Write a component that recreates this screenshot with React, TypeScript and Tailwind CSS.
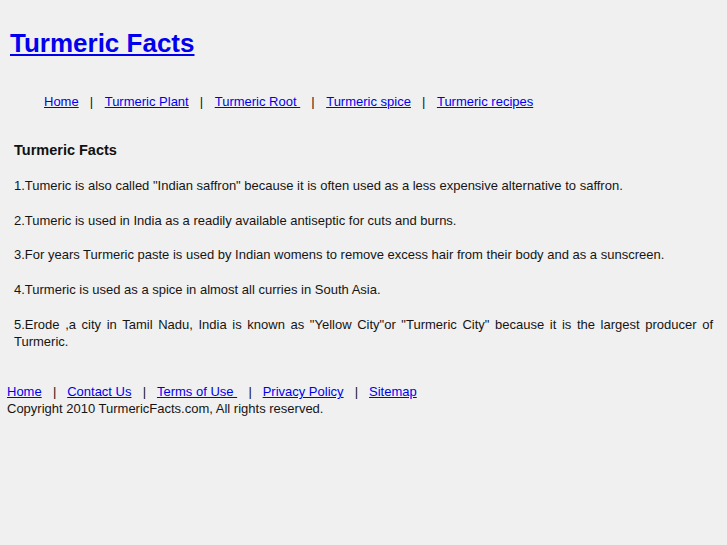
import React from "react";

const navLinks = ["Home", "Turmeric Plant", "Turmeric Root\u00a0", "Turmeric spice", "Turmeric recipes"];
const footLinks = ["Home", "Contact Us", "Terms of Use\u00a0", "Privacy Policy", "Sitemap"];

const facts = [
  '1.Tumeric is also called "Indian saffron" because it is often used as a less expensive alternative to saffron.',
  "2.Tumeric is used in India as a readily available antiseptic for cuts and burns.",
  "3.For years Turmeric paste is used by Indian womens to remove excess hair from their body and as a sunscreen.",
  "4.Turmeric is used as a spice in almost all curries in South Asia.",
  '5.Erode ,a city in Tamil Nadu, India is known as "Yellow City"or "Turmeric City" because it is the largest producer of Turmeric.',
];

export default function App() {
  return (
    <div
      className="min-h-[545px] w-full bg-[#f0f0f0] text-[#151515]"
      style={{ fontFamily: '"Liberation Sans", Arial, sans-serif' }}
    >
      <div className="pl-[10px] pt-[29px]">
        <a href="#" className="text-[26px] leading-[28px] font-bold text-[#0000ee] underline">
          Turmeric Facts
        </a>
      </div>
      <div className="flex items-center pl-[44px] pt-[34px] text-[13px] leading-[17px]">
        {navLinks.map((l, i) => (
          <React.Fragment key={i}>
            {i > 0 && <span className="pl-[11px] pr-[11.6px] text-[#151515]">|</span>}
            <a href="#" className="text-[#0000ee] underline whitespace-pre">
              {l}
            </a>
          </React.Fragment>
        ))}
      </div>
      <div className="px-[14px] pt-[31px]">
        <h2 className="text-[14.5px] leading-[18px] font-bold text-[#111111]">Turmeric Facts</h2>
        <div className="pt-[18px] text-[13px] leading-[17px]">
          {facts.map((f, i) => (
            <p key={i} className="mb-[17.7px] text-justify">
              {f}
            </p>
          ))}
        </div>
      </div>
      <div className="px-[7px] pt-[16px] text-[13px] leading-[17px]">
        <div className="flex items-center">
          {footLinks.map((l, i) => (
            <React.Fragment key={i}>
              {i > 0 && <span className="pl-[11.3px] pr-[10.8px] text-[#151515]">|</span>}
              <a href="#" className="text-[#0000ee] underline whitespace-pre">
                {l}
              </a>
            </React.Fragment>
          ))}
        </div>
        <div>Copyright 2010 TurmericFacts.com, All rights reserved.</div>
      </div>
    </div>
  );
}
